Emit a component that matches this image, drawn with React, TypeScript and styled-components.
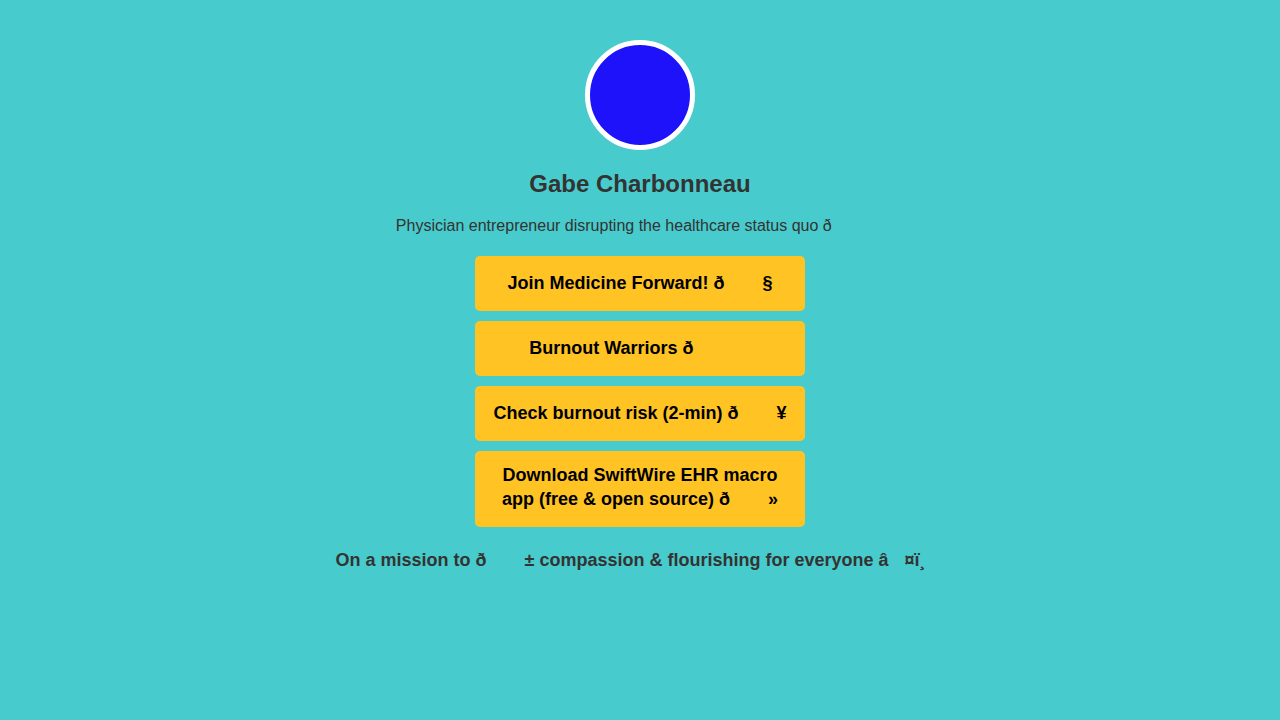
import React from "react";
import styled, { createGlobalStyle } from "styled-components";

const Global = createGlobalStyle`
  html, body { margin: 0; padding: 0; }
  body {
    background: #48cbcc;
    font-family: "Liberation Sans", Arial, sans-serif;
    color: #333333;
  }
`;

const Page = styled.main`
  min-height: 720px;
  display: flex;
  flex-direction: column;
  align-items: center;
  padding-top: 40px;
  box-sizing: border-box;
`;

const Avatar = styled.div`
  width: 100px;
  height: 100px;
  border-radius: 50%;
  background: #1d12f9;
  border: 5px solid #ffffff;
`;

const Name = styled.h1`
  margin: 20px 0 0;
  font-size: 24px;
  font-weight: 700;
  line-height: 28px;
  color: #333333;
`;

const Bio = styled.p`
  margin: 19px 0 0;
  font-size: 16px;
  line-height: 18px;
  color: #333333;
`;

const Glitch = styled.span`
  letter-spacing: 0.28em;
`;

const Links = styled.nav`
  margin-top: 21px;
  display: flex;
  flex-direction: column;
  gap: 10px;
  width: 330px;
`;

const LinkButton = styled.a`
  display: block;
  box-sizing: border-box;
  background: #ffc423;
  border-radius: 5px;
  padding: 14px 15px;
  font-size: 18px;
  font-weight: 700;
  line-height: 21px;
  color: #000000;
  text-align: center;
  text-decoration: none;

  ${Glitch} {
    line-height: 27px;
  }
`;

const Mission = styled.p`
  margin: 23px 0 0;
  font-size: 18px;
  font-weight: 700;
  line-height: 21px;
  color: #333333;
`;

const links: [string, string, string][] = [
  ["Join Medicine Forward! \u00f0", "\u009f\u0092", "\u00a7"],
  ["Burnout Warriors \u00f0", "\u009f\u0091\u008a", ""],
  ["Check burnout risk (2-min) \u00f0", "\u009f\u0094", "\u00a5"],
  ["Download SwiftWire EHR macro app (free & open source) \u00f0", "\u009f\u0092", "\u00bb"],
];

export default function App() {
  return (
    <>
      <Global />
      <Page>
        <Avatar />
        <Name>Gabe Charbonneau</Name>
        <Bio>
          Physician entrepreneur disrupting the healthcare status quo {"\u00f0"}
          <Glitch>{"\u009f\u0091\u008a"}</Glitch>
        </Bio>
        <Links>
          {links.map(([a, g, b]) => (
            <LinkButton key={a} href="#">
              {a}
              <Glitch>{g}</Glitch>
              {b}
            </LinkButton>
          ))}
        </Links>
        <Mission>
          On a mission to {"\u00f0"}
          <Glitch>{"\u009f\u008c"}</Glitch>
          {"\u00b1"} compassion &amp; flourishing for everyone {"\u00e2"}
          <Glitch>{"\u009d"}</Glitch>
          {"\u00a4\u00ef\u00b8"}
          <Glitch>{"\u008f"}</Glitch>
        </Mission>
      </Page>
    </>
  );
}
